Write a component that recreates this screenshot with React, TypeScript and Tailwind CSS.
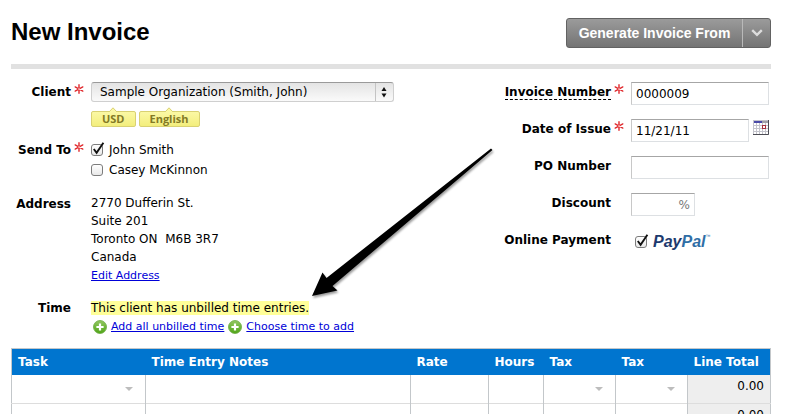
import { useState } from "react";
import type { ReactNode } from "react";

const inputClass =
  "h-[23px] border border-[#dde0e3] border-t-[#a6a6a6] border-l-[#c8c8c8] bg-white px-1 text-[12px] leading-4 text-black outline-none";

const Required = () => (
  <svg width="10" height="10" viewBox="0 0 10 10" className="shrink-0" aria-label="required">
    <path
      d="M5 0.8V9.2M1.2 2.9L8.8 7.1M8.8 2.9L1.2 7.1"
      stroke="#e0282c"
      strokeWidth="1.4"
      strokeLinecap="round"
    />
    <circle cx="5" cy="5" r="0.8" fill="#fff" />
  </svg>
);

const PlusIcon = () => (
  <svg width="14" height="14" viewBox="0 0 14 14" className="shrink-0">
    <defs>
      <linearGradient id="plus" x1="0" y1="0" x2="0" y2="1">
        <stop offset="0" stopColor="#93c763" />
        <stop offset="1" stopColor="#4fa516" />
      </linearGradient>
    </defs>
    <circle cx="7" cy="7" r="6.5" fill="url(#plus)" stroke="#69a940" strokeWidth="0.8" />
    <path d="M7 3.4V10.6M3.4 7H10.6" stroke="#fff" strokeWidth="2.2" />
  </svg>
);

const CalendarIcon = () => (
  <svg width="16" height="15" viewBox="0 0 16 15">
    <rect width="16" height="15" fill="#c4c4cc" />
    <rect x="1" y="1" width="8" height="2" fill="#4a4aa8" />
    <rect x="9" y="1" width="6" height="2" fill="#a0a0a8" />
    {[0, 1, 2, 3, 4].map((col) =>
      [0, 1, 2, 3].map((row) => (
        <rect key={`${col}-${row}`} x={1 + col * 3} y={3 + row * 3} width="2" height="2" fill="#fff" />
      ))
    )}
    <rect x="9.5" y="5.5" width="3" height="3" fill="#fff" stroke="#a8323e" />
    <path d="M0 14.5H15.5V0" fill="none" stroke="#4c4c54" />
  </svg>
);

interface CheckProps {
  id: string;
  defaultChecked?: boolean;
}

const Check = ({ id, defaultChecked = false }: CheckProps) => {
  const [checked, setChecked] = useState<boolean>(defaultChecked);

  return (
    <span className="relative inline-flex h-3 w-3 shrink-0">
      <input
        id={id}
        type="checkbox"
        checked={checked}
        onChange={() => setChecked((prev) => !prev)}
        className="h-3 w-3 appearance-none rounded-[3px] border border-[#7c7c7c] bg-linear-to-b from-[#ffffff] to-[#e9e9e9]"
      />
      {checked && (
        <svg
          width="14"
          height="14"
          viewBox="0 0 14 14"
          className="pointer-events-none absolute -top-0.5 left-0"
        >
          <path d="M2.8 7L5.6 10.8L12.4 0.8" fill="none" stroke="#111" strokeWidth="1.9" />
        </svg>
      )}
    </span>
  );
};

const Tag = ({ children }: { children: ReactNode }) => (
  <button className="relative h-4 rounded-[2px] border border-[#d9d172] bg-linear-to-b from-[#fbf8a4] to-[#f3ee7c] px-2.5 font-['Open_Sans',sans-serif] text-[11px] leading-[14px] font-bold text-[#837a26]">
    <svg width="9" height="5" viewBox="0 0 9 5" className="absolute -top-[5px] left-1/2 -translate-x-1/2">
      <path d="M0.5 5L4.5 0.8L8.5 5" fill="#fbf8a4" stroke="#d9d172" />
    </svg>
    {children}
  </button>
);

interface FieldProps {
  label: string;
  htmlFor?: string;
  required?: boolean;
  dashed?: boolean;
  children: ReactNode;
}

const Field = ({ label, htmlFor, required, dashed, children }: FieldProps) => (
  <div className="flex h-[23px]">
    <label htmlFor={htmlFor} className="flex-1 text-right text-[12px] leading-5 font-bold">
      <span className={dashed ? "border-b border-dashed border-black" : ""}>{label}</span>
    </label>
    <span className="w-5 pt-0.5 pl-[3px]">{required && <Required />}</span>
    <div className="flex w-[140px] items-start gap-1">{children}</div>
  </div>
);

const Row = ({ label, htmlFor, required, children }: FieldProps) => (
  <div className="flex">
    <label htmlFor={htmlFor} className="w-[60px] text-right text-[12px] leading-5 font-bold">
      {label}
    </label>
    <span className="w-5 pt-0.5 pl-[3px]">{required && <Required />}</span>
    <div className="flex-1">{children}</div>
  </div>
);

const Caret = () => (
  <button aria-label="Choose" className="mr-3 ml-auto block">
    <svg width="8" height="4" viewBox="0 0 8 4">
      <path d="M0 0H8L4 4Z" fill="#bdbdbd" />
    </svg>
  </button>
);

const columns = [
  { label: "Task", width: "w-[134px]", caret: true },
  { label: "Time Entry Notes", width: "", caret: false },
  { label: "Rate", width: "w-[78px]", caret: false },
  { label: "Hours", width: "w-[55px]", caret: false },
  { label: "Tax", width: "w-[72px]", caret: true },
  { label: "Tax", width: "w-[72px]", caret: true },
  { label: "Line Total", width: "w-[83px]", caret: false },
];

const App = () => {
  return (
    <div className="relative h-screen overflow-hidden bg-white pr-3.5 pl-[11px] font-['DejaVu_Sans',sans-serif] text-[12px] text-black">
      <header className="flex items-start justify-between border-b-[5px] border-[#e1e1e1] pt-[18px] pb-4">
        <h1 className="font-['Liberation_Sans',sans-serif] text-[24px] leading-7 font-bold">New Invoice</h1>
        <div className="flex h-[30px] overflow-hidden rounded-[3px] border border-[#626262] bg-linear-to-b from-[#9b9b9b] to-[#747474] font-['Liberation_Sans',sans-serif] text-[14px] font-bold text-white">
          <button className="w-[175px]">Generate Invoice From</button>
          <button aria-label="More" className="flex w-7 items-center justify-center border-l border-[#b9b9b9]">
            <svg width="12" height="8" viewBox="0 0 12 8">
              <path d="M1.2 1.2L6 5.8L10.8 1.2" fill="none" stroke="#dcdcdc" strokeWidth="2.4" />
            </svg>
          </button>
        </div>
      </header>

      <main className="flex justify-between pt-[13px]">
        <section className="w-[400px]">
          <Row label="Client" htmlFor="client" required>
            <div className="relative w-[303px]">
              <select
                id="client"
                className="block h-5 w-full appearance-none rounded-[3px] border border-[#cfcfcf] border-t-[#9a9a9a] bg-linear-to-b from-[#e4e4e4] to-[#fafafa] pl-2 text-[12px] leading-4 outline-none"
              >
                <option>Sample Organization (Smith, John)</option>
              </select>
              <svg
                width="18"
                height="18"
                viewBox="0 0 18 18"
                className="pointer-events-none absolute top-px right-px"
              >
                <path d="M0.5 0V18" stroke="#c4c4c4" />
                <path d="M6.5 8L9 4L11.500 8ZM6.500 10.5H11.500L9 14.5Z" fill="#111" />
              </svg>
            </div>
            <div className="flex gap-[3px] pt-[9px]">
              <Tag>USD</Tag>
              <Tag>English</Tag>
            </div>
          </Row>

          <div className="pt-[13px]">
            <Row label="Send To" required>
              <div className="flex h-5 items-center gap-1.5">
                <Check id="john" defaultChecked />
                <label htmlFor="john">John Smith</label>
              </div>
              <div className="flex h-5 items-center gap-1.5">
                <Check id="casey" />
                <label htmlFor="casey">Casey McKinnon</label>
              </div>
            </Row>
          </div>

          <div className="pt-3.5">
            <Row label="Address">
              <address className="leading-[18px] not-italic">
                2770 Dufferin St.
                <br />
                Suite 201
                <br />
                Toronto ON&nbsp; M6B 3R7
                <br />
                Canada
              </address>
              <a href="#address" className="block text-[11px] leading-5 text-[#0000d8] underline">
                Edit Address
              </a>
            </Row>
          </div>

          <div className="pt-3">
            <Row label="Time">
              <p className="pt-px leading-[18px]">
                <span className="bg-[#ffff99]">This client has unbilled time entries.</span>
              </p>
              <div className="flex items-center gap-1 pt-px pl-0.5 text-[11px] leading-[18px] whitespace-nowrap">
                <PlusIcon />
                <a href="#add" className="text-[#0000d8] underline">
                  Add all unbilled time
                </a>
                <PlusIcon />
                <a href="#choose" className="text-[#0000d8] underline">
                  Choose time to add
                </a>
              </div>
            </Row>
          </div>
        </section>

        <section className="flex w-[280px] flex-col gap-3.5">
          <Field label="Invoice Number" htmlFor="number" required dashed>
            <input id="number" defaultValue="0000009" className={`${inputClass} w-[138px]`} />
          </Field>
          <Field label="Date of Issue" htmlFor="date" required>
            <input id="date" defaultValue="11/21/11" className={`${inputClass} w-[118px]`} />
            <button aria-label="Pick a date" className="pt-px">
              <CalendarIcon />
            </button>
          </Field>
          <Field label="PO Number" htmlFor="po">
            <input id="po" className={`${inputClass} w-[138px]`} />
          </Field>
          <Field label="Discount" htmlFor="discount">
            <input
              id="discount"
              placeholder="%"
              className={`${inputClass} w-16 text-right placeholder:text-[#777777]`}
            />
          </Field>
          <Field label="Online Payment" htmlFor="paypal">
            <div className="flex h-6 items-center gap-1.5 pl-1">
              <Check id="paypal" defaultChecked />
              <span className="flex items-start font-['Liberation_Sans',sans-serif] text-[16px] leading-5 font-bold italic">
                <span className="text-[#1d3a6e]">Pay</span>
                <span className="text-[#2f6ea6]">Pal</span>
                <span className="text-[5px] leading-2 font-normal text-[#2f6ea6]">™</span>
              </span>
            </div>
          </Field>
        </section>
      </main>

      <table className="mt-3 w-full table-fixed border-collapse border border-[#c3c7ca]">
        <thead>
          <tr className="h-[26px] bg-[#0075cf] text-left text-white">
            {columns.map((col, i) => (
              <th key={i} className={`${col.width} pl-1.5 font-bold whitespace-nowrap`}>
                {col.label}
              </th>
            ))}
          </tr>
        </thead>
        <tbody>
          {[0, 1].map((row) => (
            <tr key={row} className="h-[29px] border-b border-[#dddddd]">
              {columns.map((col, i) =>
                i === columns.length - 1 ? (
                  <td key={i} className="bg-[#eeeeee] pt-[3px] pr-1.5 text-right align-top leading-4">
                    0.00
                  </td>
                ) : (
                  <td key={i} className="border-r border-[#c3c7ca]">
                    {col.caret && <Caret />}
                  </td>
                )
              )}
            </tr>
          ))}
        </tbody>
      </table>

      <svg
        width="190"
        height="155"
        viewBox="0 0 190 155"
        className="pointer-events-none absolute top-[146px] left-[309px] drop-shadow-[1px_2px_1px_rgba(0,0,0,0.4)]"
      >
        <path d="M182 2.5L183.5 4L23.5 140L28.5 144.5L3 150L13.5 126.500L17.5 132Z" fill="#000" />
      </svg>
    </div>
  );
};

export default App;
